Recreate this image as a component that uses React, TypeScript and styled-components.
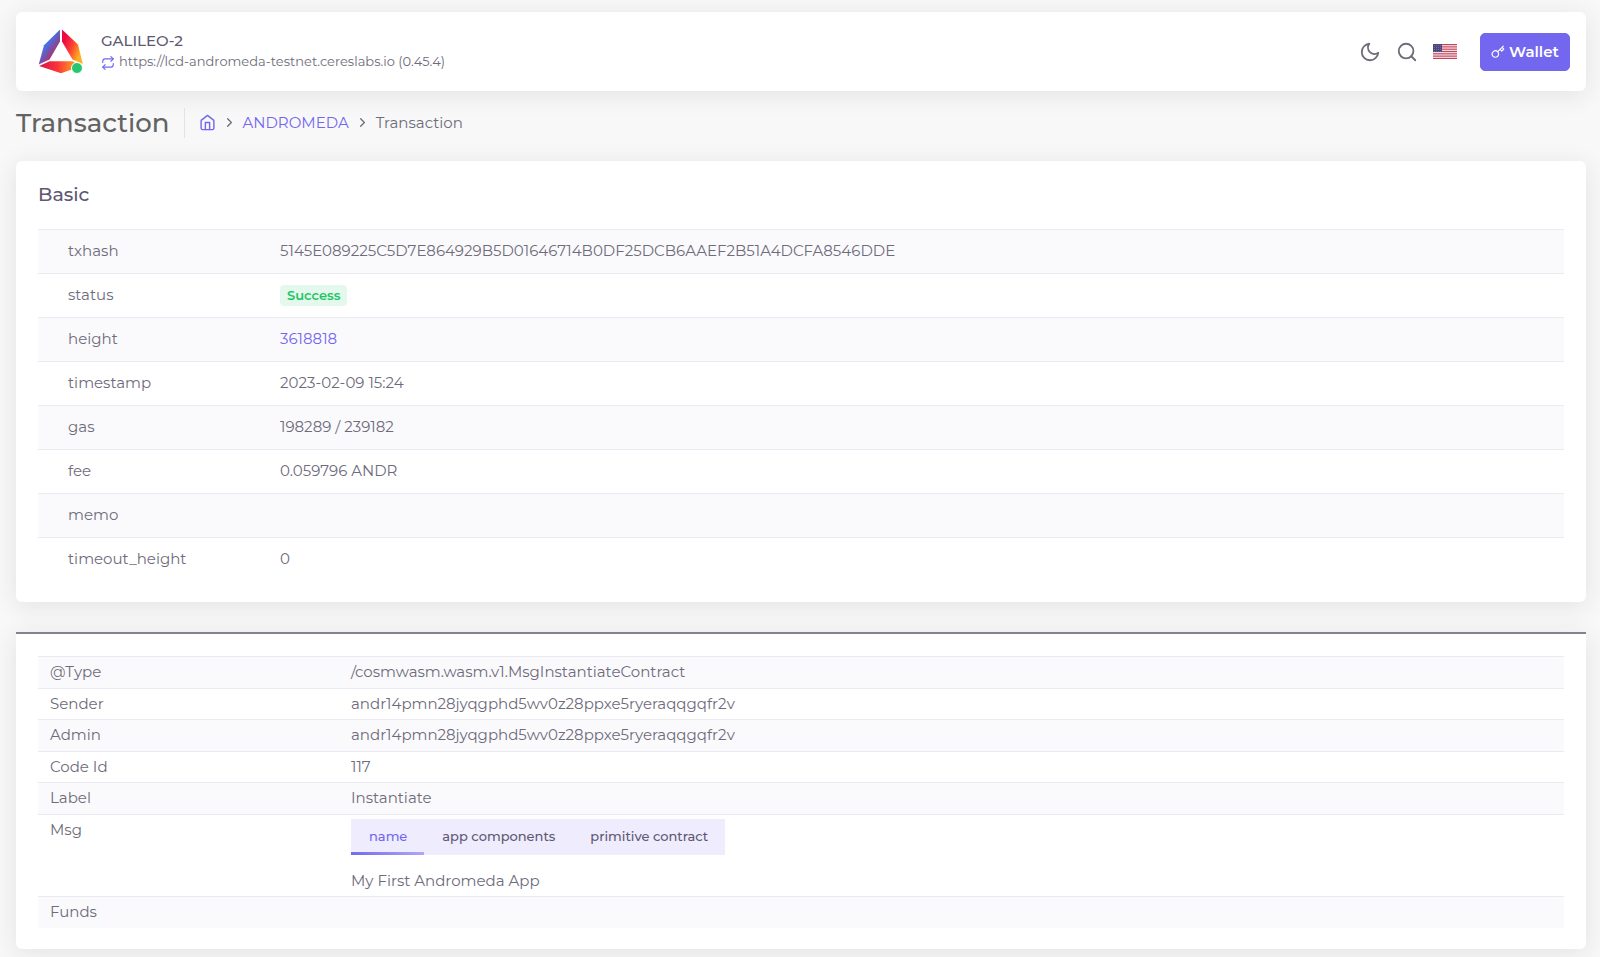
import React, { useState } from "react";
import styled, { createGlobalStyle } from "styled-components";
import { FiChevronRight, FiHome, FiKey, FiMoon, FiRepeat, FiSearch } from "react-icons/fi";

const accent = "#7367f0";
const ink = "#5e5873";
const body = "#6e6b7b";
const line = "#ebe9f1";
const stripe = "#fafafc";

const GlobalStyle = createGlobalStyle`
  *, *::before, *::after { box-sizing: border-box; }
  body {
    margin: 0;
    background: #f8f8f8;
    color: ${body};
    font-family: Montserrat, Inter, "Liberation Sans", sans-serif;
    font-size: 15px;
    line-height: 21px;
  }
  a { color: ${accent}; text-decoration: none; }
`;

const Page = styled.div`
  display: flex;
  flex-direction: column;
  padding: 12px 14px 8px 16px;
`;

const Card = styled.section`
  background: #fff;
  border-radius: 6px;
  box-shadow: 0 4px 24px 0 rgba(34, 41, 47, 0.1);
  padding: 22px 22px 21px;
`;

const Header = styled.header`
  display: flex;
  align-items: center;
  justify-content: space-between;
  min-height: 79px;
  padding: 0 16px 0 22px;
  background: #fff;
  border-radius: 6px;
  box-shadow: 0 4px 24px 0 rgba(34, 41, 47, 0.1);
`;

const Brand = styled.div`
  display: flex;
  align-items: center;
  gap: 18px;
`;

const LogoBox = styled.div`
  position: relative;
  width: 45px;
  height: 45px;
`;

const StatusDot = styled.span`
  position: absolute;
  right: 0;
  bottom: 0;
  width: 12px;
  height: 12px;
  border: 1px solid #fff;
  border-radius: 50%;
  background: #28c76f;
`;

const BrandText = styled.div`
  padding-bottom: 2px;
`;

const ChainName = styled.div`
  color: ${ink};
  font-size: 15px;
  font-weight: 500;
  line-height: 20px;
`;

const Endpoint = styled.div`
  display: flex;
  align-items: center;
  gap: 4px;
  font-size: 13px;
  line-height: 20px;

  svg { margin-top: 4px; color: ${accent}; }
`;

const Tools = styled.div`
  display: flex;
  align-items: center;
  gap: 15px;
`;

const IconButton = styled.button`
  display: flex;
  padding: 0;
  border: 0;
  background: none;
  color: ${body};
  cursor: pointer;
`;

const WalletButton = styled.button`
  display: flex;
  align-items: center;
  justify-content: center;
  gap: 4px;
  min-width: 90px;
  height: 38px;
  margin-left: 8px;
  padding: 0 10px;
  border: 1px solid ${accent};
  border-radius: 5px;
  background: ${accent};
  color: #fff;
  font-family: inherit;
  font-size: 15px;
  font-weight: 600;
  line-height: 20px;
  cursor: pointer;
`;

const TitleBar = styled.div`
  display: flex;
  align-items: center;
  height: 30px;
  margin: 17px 0 23px;
`;

const PageTitle = styled.h1`
  margin: 0;
  padding-right: 14px;
  border-right: 1px solid #e2e1e6;
  color: #636363;
  font-size: 26px;
  font-weight: 500;
  line-height: 30px;
`;

const Crumbs = styled.nav`
  display: flex;
  align-items: center;
  gap: 6px;
  padding: 0 0 2px 14px;

  a { display: flex; }
`;

const CardTitle = styled.h2`
  margin: 0 0 23px;
  color: ${ink};
  font-size: 19px;
  font-weight: 500;
  line-height: 23px;
`;

const Table = styled.table`
  width: 100%;
  border-collapse: separate;
  border-spacing: 0;
  table-layout: fixed;

  th, td {
    border-top: 1px solid ${line};
    font-weight: 400;
    text-align: left;
    vertical-align: top;
  }
  tr:nth-child(odd) > * { background: ${stripe}; }
`;

const BasicTable = styled(Table)`
  th, td { height: 44px; padding: 10px 0; }
  th { width: 242px; padding-left: 30px; }
`;

const MessageTable = styled(Table)`
  th, td { padding: 4px 0 6px; }
  tr:nth-child(even) > * { padding-bottom: 5px; }
  th { width: 313px; padding-left: 12px; }
`;

const MessageCard = styled(Card)`
  margin-top: 30px;
  border-top: 2px solid #85828f;
  border-radius: 0 0 6px 6px;
`;

const Badge = styled.span`
  display: inline-block;
  margin-top: 1px;
  padding: 0 7px;
  border-radius: 4px;
  background: #e5f8ee;
  color: #1fc565;
  font-size: 13px;
  font-weight: 600;
  vertical-align: top;
`;

const Tabs = styled.div`
  display: inline-flex;
  background: #eeecfd;
`;

const Tab = styled.button<{ $active: boolean }>`
  position: relative;
  height: 36px;
  padding: 0 17px 3px 18px;
  border: 0;
  background: none;
  color: ${(p) => (p.$active ? accent : ink)};
  font-family: inherit;
  font-size: 13px;
  font-weight: 500;
  cursor: pointer;

  &::after {
    content: "";
    display: ${(p) => (p.$active ? "block" : "none")};
    position: absolute;
    left: 0;
    right: 0;
    bottom: 0;
    height: 3px;
    background: linear-gradient(30deg, ${accent}, rgba(115, 103, 240, 0.5));
  }
`;

const TabText = styled.div`
  padding-top: 15px;
`;

const TabArea = styled.div`
  display: flex;
  flex-direction: column;
  align-items: flex-start;
`;

function Logo() {
  return (
    <svg width="45" height="45" viewBox="0 0 45 45" aria-hidden="true">
      <defs>
        <linearGradient id="left" x1="8" y1="14" x2="20" y2="23" gradientUnits="userSpaceOnUse">
          <stop offset="0" stopColor="#3f78ee" />
          <stop offset="0.45" stopColor="#7154b0" />
          <stop offset="1" stopColor="#c4265c" />
        </linearGradient>
        <linearGradient id="right" x1="24" y1="17" x2="42" y2="24" gradientUnits="userSpaceOnUse">
          <stop offset="0" stopColor="#ec0a45" />
          <stop offset="0.5" stopColor="#fb4231" />
          <stop offset="1" stopColor="#ffae22" />
        </linearGradient>
        <linearGradient id="base" x1="2" y1="36" x2="40" y2="38" gradientUnits="userSpaceOnUse">
          <stop offset="0" stopColor="#d8164f" />
          <stop offset="0.45" stopColor="#fb3338" />
          <stop offset="1" stopColor="#ffb020" />
        </linearGradient>
      </defs>
      <path d="M22 .5v12L11.500 30.500 .7 35.500 6 16.200Z" fill="url(#left)" />
      <path d="M24 .5 40 15.500 44.800 35 34.500 30.500 24 12.500Z" fill="url(#right)" />
      <path d="M11.500 32.300H34.500L44 37 23 44.200 1.200 37Z" fill="url(#base)" />
    </svg>
  );
}

function Flag() {
  const rows = [0, 1, 2, 3, 4, 5, 6, 7, 8, 9, 10, 11, 12];
  return (
    <svg width="24" height="15" viewBox="0 0 24 15" aria-hidden="true">
      <rect width="24" height="15" fill="#f4e9ec" />
      {rows.filter((n) => n % 2 === 0).map((n) => (
        <rect key={n} y={(n * 15) / 13} width="24" height={15 / 13} fill="#c4455a" />
      ))}
      <rect width="9" height="8" fill="#4b4880" />
      {[1, 3, 5, 7].map((y) =>
        [1, 3, 5, 7].map((x) => <rect key={`${x}-${y}`} x={x} y={y} width="0.6" height="0.6" fill="#a9a6c8" />)
      )}
    </svg>
  );
}

const basics: [string, React.ReactNode][] = [
  ["txhash", "5145E089225C5D7E864929B5D01646714B0DF25DCB6AAEF2B51A4DCFA8546DDE"],
  ["status", <Badge>Success</Badge>],
  ["height", <a href="#block">3618818</a>],
  ["timestamp", "2023-02-09 15:24"],
  ["gas", "198289 / 239182"],
  ["fee", "0.059796 ANDR"],
  ["memo", ""],
  ["timeout_height", "0"],
];

const tabNames = ["name", "app components", "primitive contract"];

function MessageTabs() {
  const [active, setActive] = useState(0);
  return (
    <TabArea>
      <Tabs role="tablist">
        {tabNames.map((name, i) => (
          <Tab key={name} role="tab" aria-selected={i === active} $active={i === active} onClick={() => setActive(i)}>
            {name}
          </Tab>
        ))}
      </Tabs>
      <TabText role="tabpanel">{active === 0 ? "My First Andromeda App" : ""}</TabText>
    </TabArea>
  );
}

const message: [string, React.ReactNode][] = [
  ["@Type", "/cosmwasm.wasm.v1.MsgInstantiateContract"],
  ["Sender", "andr14pmn28jyqgphd5wv0z28ppxe5ryeraqqgqfr2v"],
  ["Admin", "andr14pmn28jyqgphd5wv0z28ppxe5ryeraqqgqfr2v"],
  ["Code Id", "117"],
  ["Label", "Instantiate"],
  ["Msg", <MessageTabs />],
  ["Funds", ""],
];

function Rows({ items }: { items: [string, React.ReactNode][] }) {
  return (
    <tbody>
      {items.map(([label, value]) => (
        <tr key={label}>
          <th scope="row">{label}</th>
          <td>{value}</td>
        </tr>
      ))}
    </tbody>
  );
}

export default function App() {
  return (
    <>
      <GlobalStyle />
      <Page>
        <Header>
          <Brand>
            <LogoBox>
              <Logo />
              <StatusDot />
            </LogoBox>
            <BrandText>
              <ChainName>GALILEO-2</ChainName>
              <Endpoint>
                <FiRepeat size={14} />
                https://lcd-andromeda-testnet.cereslabs.io (0.45.4)
              </Endpoint>
            </BrandText>
          </Brand>
          <Tools>
            <IconButton aria-label="Dark mode"><FiMoon size={22} /></IconButton>
            <IconButton aria-label="Search"><FiSearch size={22} /></IconButton>
            <IconButton aria-label="Language"><Flag /></IconButton>
            <WalletButton><FiKey size={14} />Wallet</WalletButton>
          </Tools>
        </Header>

        <TitleBar>
          <PageTitle>Transaction</PageTitle>
          <Crumbs aria-label="Breadcrumb">
            <a href="#home" aria-label="Home"><FiHome size={17} /></a>
            <FiChevronRight size={15} />
            <a href="#andromeda">ANDROMEDA</a>
            <FiChevronRight size={15} />
            <span>Transaction</span>
          </Crumbs>
        </TitleBar>

        <Card>
          <CardTitle>Basic</CardTitle>
          <BasicTable><Rows items={basics} /></BasicTable>
        </Card>

        <MessageCard>
          <MessageTable><Rows items={message} /></MessageTable>
        </MessageCard>
      </Page>
    </>
  );
}
